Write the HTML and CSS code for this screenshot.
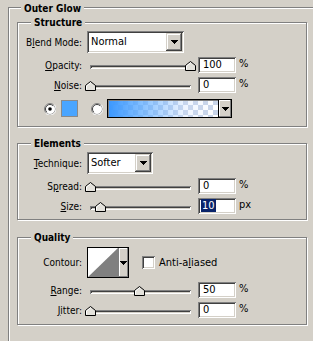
FILE: index.html
```html
<!DOCTYPE html>
<html lang="en">
<head>
  <meta charset="UTF-8">
  <title>Outer Glow</title>
  <link rel="stylesheet" href="styles.css">
</head>
<body>
  <div class="outer">
    <div class="title outer-title">Outer Glow</div>

    <div class="group structure">
      <div class="title">Structure</div>
      <div class="row row-tall">
        <label class="lbl">B<u>l</u>end Mode:</label>
        <div class="select blend">
          <span class="select-val">Normal</span>
          <span class="select-btn"><svg width="7" height="4"><path d="M0 0h7v1h-1v1h-1v1h-1v1h-1v-1h-1v-1h-1v-1h-1z"/></svg></span>
        </div>
      </div>
      <div class="row gap4">
        <label class="lbl"><u>O</u>pacity:</label>
        <div class="slider">
          <div class="track"></div>
          <svg class="thumb" style="left:100px" width="11" height="10" viewBox="0 0 11 10"><path d="M0.5 9.5V4.5L5.5 0.5L10.5 4.5V9.5Z" fill="#e4e2dc" stroke="#000"/><path d="M1.5 8.5V5L5.5 1.8" fill="none" stroke="#fff"/></svg>
        </div>
        <div class="field">100</div><span class="unit">%</span>
      </div>
      <div class="row gap4">
        <label class="lbl"><u>N</u>oise:</label>
        <div class="slider">
          <div class="track"></div>
          <svg class="thumb" style="left:0px" width="11" height="10" viewBox="0 0 11 10"><path d="M0.5 9.5V4.5L5.5 0.5L10.5 4.5V9.5Z" fill="#e4e2dc" stroke="#000"/><path d="M1.5 8.5V5L5.5 1.8" fill="none" stroke="#fff"/></svg>
        </div>
        <div class="field">0</div><span class="unit">%</span>
      </div>
      <div class="row row-color">
        <svg class="radio first" width="12" height="12" viewBox="0 0 12 12">
          <circle cx="6" cy="6" r="5.5" fill="#fff" stroke="#808080"/>
          <path d="M10.3 1.7A5.5 5.5 0 0 1 1.7 10.3" fill="none" stroke="#fff"/>
          <path d="M2.8 9.2A4.5 4.5 0 0 1 9.2 2.8" fill="none" stroke="#404040"/>
          <circle cx="6" cy="6" r="1.8" fill="#000"/>
        </svg>
        <div class="swatch"></div>
        <svg class="radio second" width="12" height="12" viewBox="0 0 12 12">
          <circle cx="6" cy="6" r="5.5" fill="#fff" stroke="#808080"/>
          <path d="M10.3 1.7A5.5 5.5 0 0 1 1.7 10.3" fill="none" stroke="#fff"/>
          <path d="M2.8 9.2A4.5 4.5 0 0 1 9.2 2.8" fill="none" stroke="#404040"/>
        </svg>
        <div class="gradient">
          <div class="gradient-fill"></div>
          <span class="gradient-btn"><svg width="7" height="4"><path d="M0 0h7v1h-1v1h-1v1h-1v1h-1v-1h-1v-1h-1v-1h-1z"/></svg></span>
        </div>
      </div>
    </div>

    <div class="group elements">
      <div class="title">Elements</div>
      <div class="row row-tall">
        <label class="lbl"><u>T</u>echnique:</label>
        <div class="select technique">
          <span class="select-val">Softer</span>
          <span class="select-btn"><svg width="7" height="4"><path d="M0 0h7v1h-1v1h-1v1h-1v1h-1v-1h-1v-1h-1v-1h-1z"/></svg></span>
        </div>
      </div>
      <div class="row gap4">
        <label class="lbl">S<u>p</u>read:</label>
        <div class="slider">
          <div class="track"></div>
          <svg class="thumb" style="left:0px" width="11" height="10" viewBox="0 0 11 10"><path d="M0.5 9.5V4.5L5.5 0.5L10.5 4.5V9.5Z" fill="#e4e2dc" stroke="#000"/><path d="M1.5 8.5V5L5.5 1.8" fill="none" stroke="#fff"/></svg>
        </div>
        <div class="field">0</div><span class="unit">%</span>
      </div>
      <div class="row gap4">
        <label class="lbl"><u>S</u>ize:</label>
        <div class="slider">
          <div class="track"></div>
          <svg class="thumb" style="left:10px" width="11" height="10" viewBox="0 0 11 10"><path d="M0.5 9.5V4.5L5.5 0.5L10.5 4.5V9.5Z" fill="#e4e2dc" stroke="#000"/><path d="M1.5 8.5V5L5.5 1.8" fill="none" stroke="#fff"/></svg>
        </div>
        <div class="field"><span class="sel">10</span></div><span class="unit">px</span>
      </div>
    </div>

    <div class="group quality">
      <div class="title">Quality</div>
      <div class="row row-contour">
        <label class="lbl">Contour:</label>
        <div class="contour">
          <svg class="contour-preview" width="30" height="29" viewBox="0 0 30 29"><path d="M0 29L30 0V29Z" fill="#808080"/></svg>
          <span class="contour-btn"><svg width="7" height="4"><path d="M0 0h7v1h-1v1h-1v1h-1v1h-1v-1h-1v-1h-1v-1h-1z"/></svg></span>
        </div>
        <div class="check"></div>
        <span class="check-lbl">Anti-a<u>l</u>iased</span>
      </div>
      <div class="row gap4">
        <label class="lbl"><u>R</u>ange:</label>
        <div class="slider">
          <div class="track"></div>
          <svg class="thumb" style="left:49px" width="11" height="10" viewBox="0 0 11 10"><path d="M0.5 9.5V4.5L5.5 0.5L10.5 4.5V9.5Z" fill="#e4e2dc" stroke="#000"/><path d="M1.5 8.5V5L5.5 1.8" fill="none" stroke="#fff"/></svg>
        </div>
        <div class="field">50</div><span class="unit">%</span>
      </div>
      <div class="row gap4">
        <label class="lbl"><u>J</u>itter:</label>
        <div class="slider">
          <div class="track"></div>
          <svg class="thumb" style="left:0px" width="11" height="10" viewBox="0 0 11 10"><path d="M0.5 9.5V4.5L5.5 0.5L10.5 4.5V9.5Z" fill="#e4e2dc" stroke="#000"/><path d="M1.5 8.5V5L5.5 1.8" fill="none" stroke="#fff"/></svg>
        </div>
        <div class="field">0</div><span class="unit">%</span>
      </div>
    </div>
  </div>
</body>
</html>
```

FILE: styles.css
```css
html, body {
  margin: 0;
  height: 100%;
  overflow: hidden;
}
body {
  background: #d4d0c8;
  font-family: "DejaVu Sans Condensed", "DejaVu Sans", sans-serif;
  font-size: 10px;
  color: #000;
}
.outer {
  margin: 7px 0 0 8px;
  height: calc(100% - 7px);
  box-sizing: border-box;
  padding-left: 8px;
  border-top: 1px solid #808080;
  border-left: 1px solid #808080;
  box-shadow: inset 1px 1px #fff;
}
.title {
  width: fit-content;
  line-height: 13px;
  height: 13px;
  padding: 0 3px;
  background: #d4d0c8;
  font-weight: bold;
  margin: -7px 0 0 13px;
}
.outer-title {
  margin: -6px 0 0 4px;
}
.group {
  width: 290px;
  box-sizing: border-box;
  border: 1px solid #808080;
  box-shadow: inset 1px 1px #fff, 1px 1px #fff;
}
.structure {
  margin-top: 7px;
  padding-bottom: 8px;
}
.elements {
  margin-top: 16px;
  padding-bottom: 5px;
}
.quality {
  margin-top: 17px;
  padding-bottom: 6px;
}
.row {
  display: flex;
  align-items: center;
  height: 16px;
}
.row-tall {
  height: 22px;
  margin-top: 2px;
}
.gap4 {
  margin-top: 4px;
}
.lbl {
  width: 64px;
  text-align: right;
  flex: none;
}
.select {
  display: flex;
  height: 22px;
  box-sizing: border-box;
  margin-left: 5px;
  padding: 2px;
  background: #fff;
  box-shadow: inset 1px 1px #808080, inset -1px -1px #fff, inset 2px 2px #404040, inset -2px -2px #d4d0c8;
}
.blend {
  width: 97px;
}
.technique {
  width: 66px;
}
.select-val {
  flex: 1;
  padding-left: 2px;
  line-height: 18px;
  font-size: 11px;
}
.select-btn, .gradient-btn, .contour-btn {
  display: flex;
  align-items: center;
  justify-content: center;
  background: #d4d0c8;
}
.select-btn {
  width: 16px;
  box-shadow: inset -1px -1px #404040, inset 1px 1px #d4d0c8, inset -2px -2px #808080, inset 2px 2px #fff;
}
.slider {
  position: relative;
  width: 111px;
  height: 16px;
  margin-left: 3px;
  flex: none;
}
.track {
  margin: 8px 5px 0;
  height: 4px;
  box-shadow: inset 1px 1px #808080, inset -1px -1px #fff, inset 2px 2px #404040;
  background: #d4d0c8;
}
.thumb {
  position: absolute;
  top: 4px;
}
.field {
  width: 38px;
  height: 16px;
  box-sizing: border-box;
  margin-left: 2px;
  padding: 2px 0 0 5px;
  background: #fff;
  line-height: 12px;
  font-size: 11px;
  box-shadow: inset 1px 1px #808080, inset -1px -1px #fff, inset 2px 2px #404040, inset -2px -2px #d4d0c8;
}
.sel {
  background: #0a246a;
  color: #fff;
  padding: 0 1px;
  margin-left: -2px;
}
.unit {
  margin-left: 3px;
  font-size: 11px;
  align-self: flex-start;
  line-height: 13px;
}
.row-color {
  height: 19px;
  margin-top: 6px;
}
.radio.first {
  margin-left: 26px;
}
.radio.second {
  margin-left: 13px;
}
.swatch {
  width: 17px;
  height: 17px;
  box-sizing: border-box;
  margin-left: 5px;
  background: #4aa5ff;
  border: 1px solid #8a8a8a;
}
.gradient {
  display: flex;
  width: 125px;
  height: 19px;
  box-sizing: border-box;
  margin-left: 4px;
  border: 1px solid #000;
  background: #fff;
}
.gradient-fill {
  flex: 1;
  box-shadow: inset 1px 1px #808080;
  background:
    linear-gradient(to right, #3a97ff, rgba(90, 170, 255, 0.75) 30%, rgba(200, 220, 255, 0.3) 70%, rgba(255, 255, 255, 0)),
    conic-gradient(#c8d4e8 25%, #fff 0 50%, #c8d4e8 0 75%, #fff 0) 0 0 / 10px 10px;
}
.gradient-btn {
  width: 12px;
  border-left: 1px solid #000;
  box-shadow: inset -1px -1px #808080, inset 1px 1px #fff;
}
.row-contour {
  height: 31px;
  margin-top: 3px;
}
.contour {
  display: flex;
  width: 42px;
  height: 31px;
  box-sizing: border-box;
  margin-left: 5px;
  border: 1px solid #000;
  background: #fff;
}
.contour-preview {
  display: block;
}
.contour-btn {
  flex: 1;
  border-left: 1px solid #808080;
  box-shadow: inset -1px -1px #808080, inset 1px 1px #fff;
}
.check {
  width: 13px;
  height: 13px;
  box-sizing: border-box;
  margin-left: 13px;
  background: #fff;
  box-shadow: inset 1px 1px #808080, inset -1px -1px #fff, inset 2px 2px #404040, inset -2px -2px #d4d0c8;
}
.check-lbl {
  margin-left: 4px;
  font-size: 11px;
}
```
